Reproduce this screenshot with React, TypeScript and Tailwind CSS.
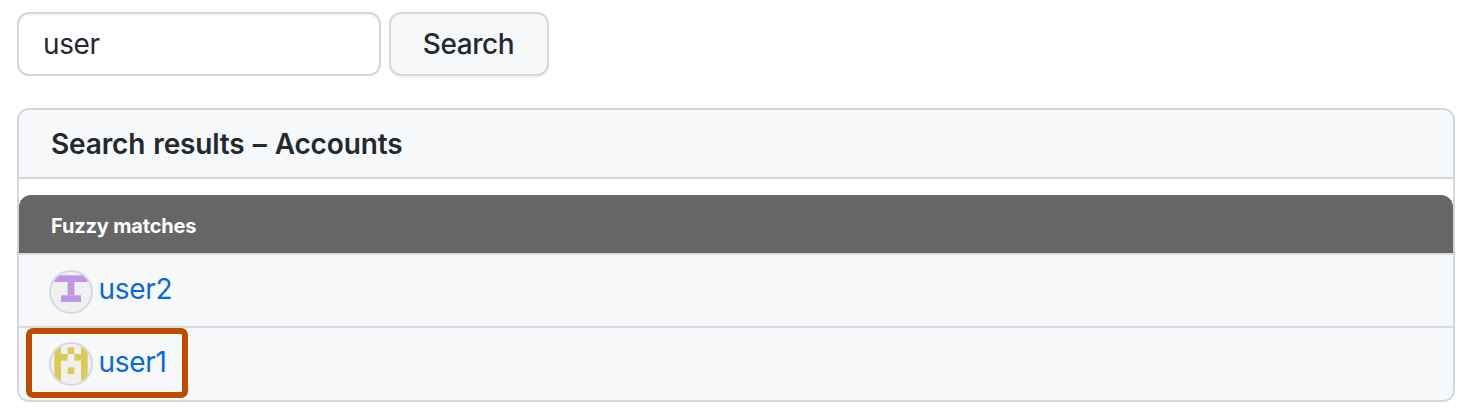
type Cell = [column: number, row: number, width: number, height: number];

type Account = { name: string; color: string; cells: Cell[]; highlighted?: boolean };

const accounts: Account[] = [
  {
    name: 'user2',
    color: '#bf96e4',
    cells: [
      [0, 0, 5, 1],
      [2, 1, 1, 2],
      [1, 3, 3, 1],
    ],
  },
  {
    name: 'user1',
    color: '#dacb58',
    highlighted: true,
    cells: [
      [0, 0, 1, 5],
      [4, 0, 1, 5],
      [2, 0, 1, 1],
      [1, 1, 1, 1],
      [3, 1, 1, 1],
      [2, 3, 1, 1],
    ],
  },
];

function Identicon({ color, cells }: Pick<Account, 'color' | 'cells'>) {
  return (
    <span className="block size-11 shrink-0 overflow-hidden rounded-full border-2 border-[#d5d9dd] bg-[#f0f0f0]">
      <svg viewBox="-0.5 -0.5 6 6" className="block size-10" fill={color} aria-hidden="true">
        {cells.map(([x, y, width, height]) => (
          <rect key={`${x}-${y}`} x={x} y={y} width={width} height={height} />
        ))}
      </svg>
    </span>
  );
}

function AccountRow({ account }: { account: Account }) {
  return (
    <li className="group relative flex h-[73px] border-t-2 border-[#d8dee4] bg-[#f6f8fa] pt-[15px] pl-[30px] last:h-[74px] last:pt-[14px]">
      <a href="#" className="flex h-11 items-center gap-[5.5px] text-[28px] text-[#0969da]">
        <Identicon color={account.color} cells={account.cells} />
        <span className="-mt-1.5 tracking-[-0.3px] group-last:-mt-1">{account.name}</span>
      </a>
      {account.highlighted && (
        <span className="pointer-events-none absolute top-0 left-[7px] h-[70px] w-[162px] rounded-[7px] border-6 border-[#bc4c00]" />
      )}
    </li>
  );
}

export default function App() {
  return (
    <main className="h-[416px] bg-white pt-3 pr-[17px] pl-[17px] font-['Inter','Liberation_Sans',sans-serif] text-[28px] text-[#24292f] antialiased">
      <form className="flex gap-2" onSubmit={(event) => event.preventDefault()}>
        <input
          type="text"
          defaultValue="user"
          aria-label="Search accounts"
          className="h-16 w-[364px] rounded-xl border-2 border-[#d0d7de] bg-white px-6 tracking-[-0.4px] shadow-[inset_0_2px_0_rgba(208,215,222,0.2)] outline-none"
        />
        <button
          type="submit"
          className="h-16 w-40 rounded-xl border-2 border-[#d5d8da] bg-[#f6f8fa] pr-px font-[550] tracking-[-0.4px] shadow-[0_2px_0_rgba(31,35,40,0.04)]"
        >
          Search
        </button>
      </form>
      <section className="mt-8 h-[294px] overflow-hidden rounded-xl border-2 border-[#d0d7de]">
        <h2 className="flex h-[69px] items-center border-b-2 border-[#d0d7de] bg-[#f6f8fa] pl-8 font-semibold tracking-[-0.15px] [word-spacing:1.2px]">
          Search results – Accounts
        </h2>
        <h3 className="mt-4 flex h-[58px] items-center rounded-t-xl bg-[#666666] pt-1 pl-8 text-[20px] font-bold tracking-[-0.17px] text-white">
          Fuzzy matches
        </h3>
        <ul>
          {accounts.map((account) => (
            <AccountRow key={account.name} account={account} />
          ))}
        </ul>
      </section>
    </main>
  );
}
